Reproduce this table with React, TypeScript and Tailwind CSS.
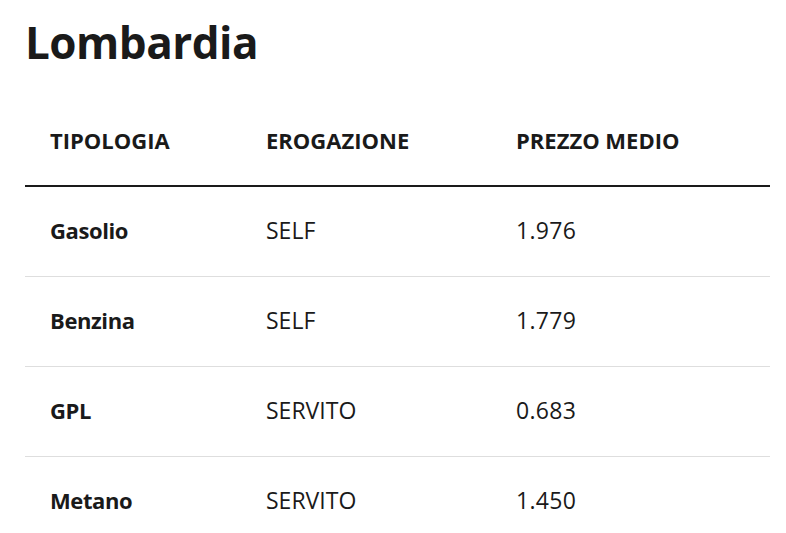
const rows = [
  { tipo: "Gasolio", erog: "SELF", prezzo: "1.976" },
  { tipo: "Benzina", erog: "SELF", prezzo: "1.779" },
  { tipo: "GPL", erog: "SERVITO", prezzo: "0.683" },
  { tipo: "Metano", erog: "SERVITO", prezzo: "1.450" },
];

const App = () => {
  return (
    <main className="min-h-screen bg-white px-[25px] pt-[12px] text-[#1a1a1a] font-['Open_Sans',sans-serif]">
      {/* Title */}
      <h1 className="text-[44px] leading-[60px] font-bold tracking-[-0.5px]">Lombardia</h1>

      {/* Table */}
      <table className="mt-[24px] w-[745px] border-collapse text-left">
        <thead>
          <tr className="h-[90px] border-b-2 border-[#1a1a1a]">
            <th className="w-[216px] pl-[25px] text-[22px] font-bold">TIPOLOGIA</th>
            <th className="w-[250px] pl-[25px] text-[22px] font-bold">EROGAZIONE</th>
            <th className="pl-[25px] text-[22px] font-bold">PREZZO MEDIO</th>
          </tr>
        </thead>
        <tbody>
          {rows.map((r, i) => (
            <tr
              key={r.tipo}
              className={i < rows.length - 1 ? "h-[90px] border-b border-[#dedede]" : "h-[90px]"}
            >
              <td className="pl-[25px] pb-[2px] text-[22px] font-bold tracking-[-0.4px]">{r.tipo}</td>
              <td className="pl-[25px] pb-[2px] text-[23px] font-normal">{r.erog}</td>
              <td className="pl-[25px] pb-[2px] text-[23px] font-normal tracking-[0.3px]">{r.prezzo}</td>
            </tr>
          ))}
        </tbody>
      </table>
    </main>
  );
};

export default App;
